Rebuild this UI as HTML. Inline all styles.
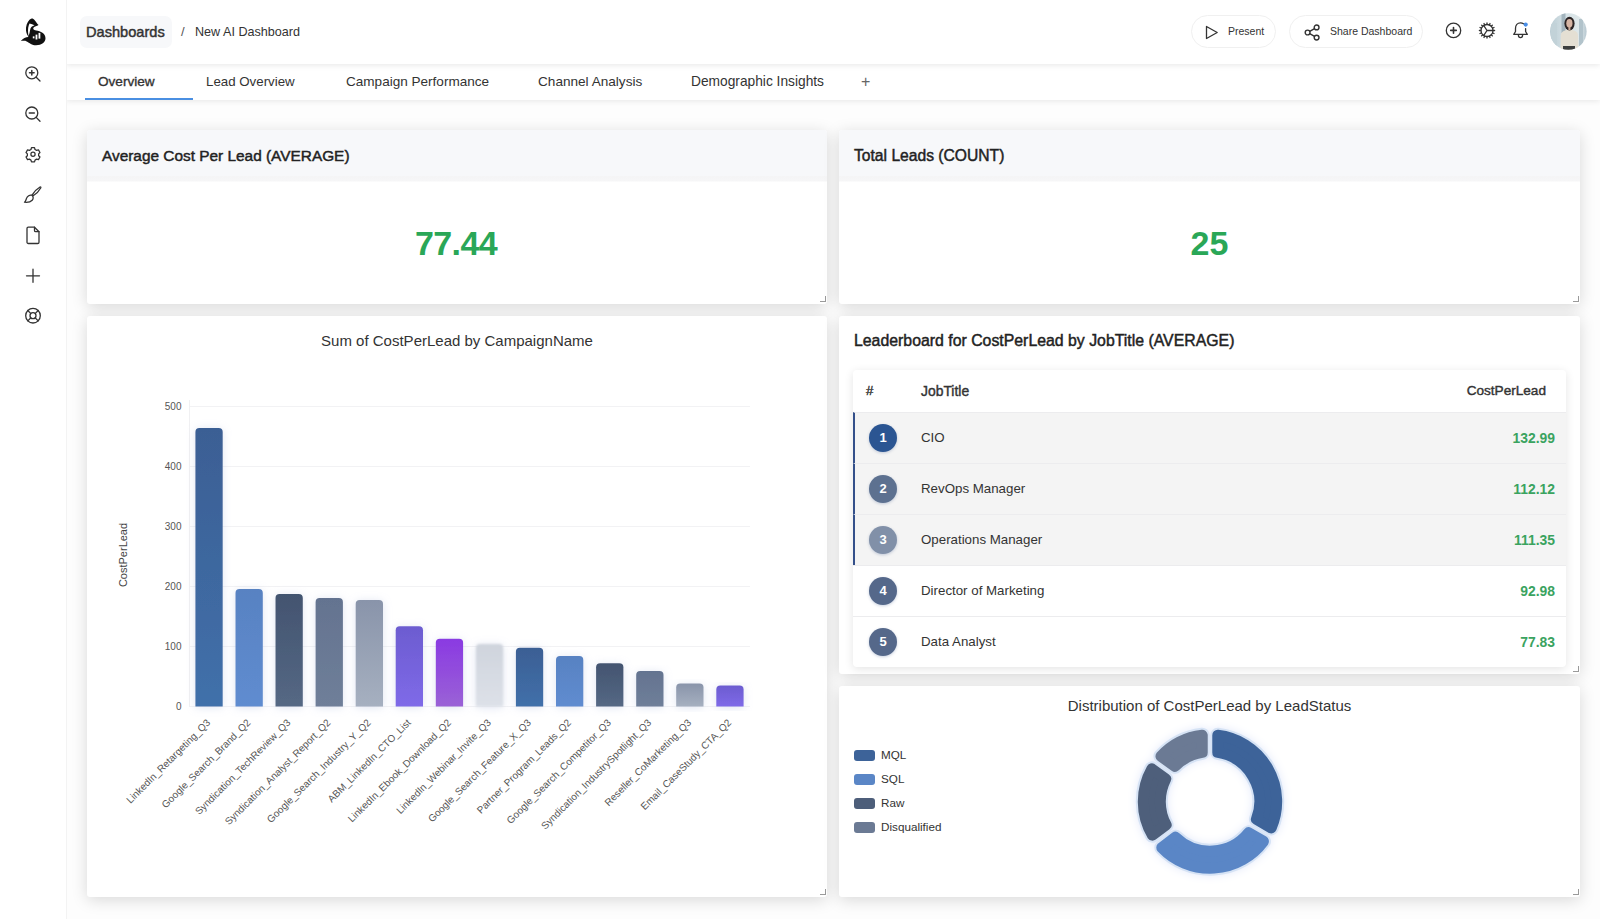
<!DOCTYPE html>
<html><head><meta charset="utf-8">
<style>
*{box-sizing:border-box;margin:0;padding:0}
html,body{width:1600px;height:919px;overflow:hidden;background:#fdfdfd;font-family:"Liberation Sans",sans-serif;color:#222}
.abs{position:absolute}
svg text{font-family:"Liberation Sans",sans-serif}
#side{position:absolute;left:0;top:0;width:67px;height:919px;background:#fff;border-right:1.5px solid #f3f3f3;z-index:4}
#hdr{position:absolute;left:66px;top:0;width:1534px;height:64px;background:#fff;box-shadow:0 1px 6px rgba(0,0,0,0.10);z-index:3}
#tabs{position:absolute;left:66px;top:64px;width:1534px;height:36px;background:#fff;box-shadow:0 1px 6px rgba(0,0,0,0.09);z-index:2}
.tab{position:absolute;top:1px;height:36px;line-height:34px;font-size:13px;color:#333;white-space:nowrap}
.card{position:absolute;background:#fff;border-radius:3px;box-shadow:0 3px 16px rgba(0,0,0,0.15)}
.chead{position:absolute;left:0;top:0;right:0;height:52px;background:linear-gradient(#f7f8fa 0,#f7f8fa 46px,#f5f5f6 46px,#f6f6f7 51px,#fff 52px);border-radius:3px 3px 0 0}
.ctitle{position:absolute;font-size:15.4px;font-weight:normal;color:#222;white-space:nowrap;line-height:18px;-webkit-text-stroke:0.45px #222}
.big{position:absolute;font-size:34px;font-weight:bold;color:#2aa757;white-space:nowrap;line-height:36px}
.rz{position:absolute;right:1px;bottom:2px;width:6px;height:6px;border-right:1.5px solid #9a9a9a;border-bottom:1.5px solid #9a9a9a}
.pill{position:absolute;top:15px;height:33px;border:1px solid #f0f0f0;border-radius:17px;background:#fff}
.pill span{position:absolute;top:0;line-height:31px;font-size:10.5px;color:#333;white-space:nowrap}
.tbl{position:absolute;left:14px;top:54px;width:713px;height:297px;background:#fff;border-radius:4px;box-shadow:0 2px 10px rgba(0,0,0,0.11);overflow:hidden}
.row{position:absolute;left:0;width:713px;height:51px;border-top:1px solid #ececee}
.row.hl{background:#f4f4f4;border-left:2px solid #34508a}
.badge{position:absolute;left:16px;top:11px;width:28px;height:28px;border-radius:14px;color:#fff;font-weight:bold;font-size:13px;text-align:center;line-height:28px;box-shadow:0 1px 3px rgba(40,70,130,0.25)}
.row.hl .badge{left:14px}
.jt{position:absolute;left:68px;top:0;line-height:50px;font-size:13.3px;color:#333;white-space:nowrap}
.row.hl .jt{left:66px}
.val{position:absolute;right:11px;top:0;line-height:51px;font-size:13.9px;font-weight:bold;color:#3aa35f;white-space:nowrap}
.leg{position:absolute;left:15px;width:21px;height:11px;border-radius:3px}
.legt{position:absolute;left:42px;font-size:11.7px;color:#333;line-height:14px;white-space:nowrap}
</style></head>
<body>
<div id="side">
<svg class="abs" style="left:0;top:0" width="66" height="340" viewBox="0 0 66 340" fill="none" stroke="#333" stroke-width="1.3" stroke-linecap="round" stroke-linejoin="round">
  <!-- logo -->
  <g transform="translate(18,16) scale(0.0348)" stroke="none">
    <path fill="#111" d="M420 70 C480 90,520 180,560 230 L590 262 C540 290,480 300,450 330 C420 360,440 400,520 420 C650 440,790 500,790 640 C790 760,680 840,520 840 C400 840,330 770,250 730 C190 700,120 720,80 720 C150 640,220 600,300 600 C270 560,240 500,230 420 C220 300,260 180,330 110 C360 80,390 70,420 70 Z"/>
    <path fill="#fff" d="M330 215 C380 225,430 245,475 268 C410 288,362 322,348 400 C338 460,328 520,306 572 C286 500,284 400,294 330 C304 280,316 240,330 215 Z"/>
    <rect fill="#fff" x="425" y="585" width="48" height="58"/>
    <rect fill="#fff" x="505" y="535" width="52" height="140"/>
    <rect fill="#fff" x="590" y="485" width="52" height="165"/>
  </g>
  <!-- zoom in -->
  <circle cx="31.8" cy="72.8" r="6"/><path d="M36.2,77.2 L40,81"/><path d="M31.8,70.5 V75.1 M29.5,72.8 H34.1" stroke-width="1.5"/>
  <!-- zoom out -->
  <circle cx="31.8" cy="113" r="6"/><path d="M36.2,117.4 L40,121.2"/><path d="M29.3,113 H34.3" stroke-width="1.5"/>
  <!-- gear -->
  <g transform="translate(33,154.2) scale(0.84) translate(-33,-154.5)" stroke-width="1.5">
  <path d="M31.2,147.2 h3.6 l0.6,2.2 l1.9,1.1 l2.2,-0.6 l1.8,3.1 l-1.6,1.6 v2.2 l1.6,1.6 l-1.8,3.1 l-2.2,-0.6 l-1.9,1.1 l-0.6,2.2 h-3.6 l-0.6,-2.2 l-1.9,-1.1 l-2.2,0.6 l-1.8,-3.1 l1.6,-1.6 v-2.2 l-1.6,-1.6 l1.8,-3.1 l2.2,0.6 l1.9,-1.1 z" transform="translate(0,-0.5)"/>
  <circle cx="33" cy="154.5" r="2.5"/>
  </g>
  <!-- brush -->
  <path d="M32.2,194.8 C34,192 37.5,188.5 40,187 C40.8,186.6 41.1,187.2 40.7,188 C39.3,190.5 35.8,194.3 33.2,195.8 Z"/>
  <path d="M31.8,195.2 C33.5,196.3 33.6,198.7 32.2,200.2 C30.5,202 27.5,202.5 24.5,202.2 C25.8,201.3 26,199.8 26.5,198.4 C27.3,196.2 29.8,194.5 31.8,195.2 Z"/>
  <!-- file -->
  <path d="M27,228.5 A1.3,1.3 0 0 1 28.3,227.2 H34.5 L39,231.7 V242.2 A1.3,1.3 0 0 1 37.7,243.5 H28.3 A1.3,1.3 0 0 1 27,242.2 Z"/><path d="M34.5,227.2 V230.5 A1.2,1.2 0 0 0 35.7,231.7 H39"/>
  <!-- plus -->
  <path d="M33,269.2 V282.3 M26.5,275.8 H39.5"/>
  <!-- lifebuoy -->
  <circle cx="33" cy="315.7" r="7.3"/><circle cx="33" cy="315.7" r="3"/>
  <path d="M27.8,310.5 L30.9,313.6 M38.2,310.5 L35.1,313.6 M27.8,320.9 L30.9,317.8 M38.2,320.9 L35.1,317.8"/>
</svg>
</div>

<div id="hdr">
  <div class="abs" style="left:14px;top:16px;width:92px;height:32px;background:#f7f8fa;border-radius:7px"></div>
  <div class="abs" style="left:20px;top:16px;line-height:32px;font-size:14.6px;color:#333;-webkit-text-stroke:0.45px #333">Dashboards</div>
  <div class="abs" style="left:115px;top:16px;line-height:32px;font-size:13px;color:#555">/</div>
  <div class="abs" style="left:129px;top:16px;line-height:32px;font-size:12.6px;color:#333">New AI Dashboard</div>

  <div class="pill" style="left:1125px;width:85px">
    <svg class="abs" style="left:13px;top:9px" width="14" height="15" viewBox="0 0 14 15" fill="none" stroke="#333" stroke-width="1.3" stroke-linejoin="round"><path d="M1.5,1.5 L12.2,7.5 L1.5,13.5 Z"/></svg>
    <span style="left:36px">Present</span>
  </div>
  <div class="pill" style="left:1223px;width:134px">
    <svg class="abs" style="left:14px;top:8px" width="17" height="17" viewBox="0 0 17 17" fill="none" stroke="#333" stroke-width="1.4"><circle cx="3.6" cy="8.5" r="2.4"/><circle cx="12.6" cy="3.4" r="2.4"/><circle cx="12.6" cy="13.6" r="2.4"/><path d="M5.7,7.3 L10.5,4.6 M5.7,9.7 L10.5,12.4"/></svg>
    <span style="left:40px">Share Dashboard</span>
  </div>
  <svg class="abs" style="left:1370px;top:12px" width="165" height="40" viewBox="1436 12 165 40" fill="none" stroke="#333" stroke-width="1.3" stroke-linecap="round" stroke-linejoin="round">
    <circle cx="1453.5" cy="30.4" r="7.2"/><path d="M1453.5,27.6 V33.2 M1450.7,30.4 H1456.3" stroke-width="1.6"/>
    <circle cx="1487" cy="30.5" r="6"/>
    <path d="M1487,30.5 L1492.8,30.5 M1487,30.5 L1483.8,25.6 M1487,30.5 L1483.8,35.4"/>
    <path d="M1487,22.9 V24.2 M1487,36.8 V38.1 M1479.4,30.5 H1480.7 M1493.3,30.5 H1494.6 M1481.6,25.1 L1482.5,26 M1491.5,35 L1492.4,35.9 M1481.6,35.9 L1482.5,35 M1491.5,26 L1492.4,25.1 M1484,23.5 L1484.5,24.7 M1490,23.5 L1489.5,24.7 M1484,37.5 L1484.5,36.3 M1490,37.5 L1489.5,36.3 M1480,27.5 L1481.2,28 M1480,33.5 L1481.2,33 M1494,27.5 L1492.8,28 M1494,33.5 L1492.8,33"/>
    <path d="M1523.5,23.8 C1522.6,23.2 1521.6,22.9 1520.5,22.9 C1517.4,22.9 1515.5,25.3 1515.5,28.3 V31.5 L1513.8,34.4 H1527.3 L1525.6,31.5 V28.6"/>
    <path d="M1518.4,35 C1518.4,36.5 1519.3,37.6 1520.5,37.6 C1521.7,37.6 1522.6,36.5 1522.6,35"/>
    <circle cx="1525.7" cy="24.6" r="2.1" fill="#4a8ee6" stroke="none"/>
  </svg>
  <svg class="abs" style="left:1483px;top:13px" width="38" height="38" viewBox="0 0 38 38">
    <defs><clipPath id="av"><circle cx="19.3" cy="18.5" r="18.3"/></clipPath>
    <linearGradient id="avbg" x1="0" y1="0" x2="1" y2="0"><stop offset="0" stop-color="#b9cbd3"/><stop offset="0.45" stop-color="#d6e2e6"/><stop offset="0.8" stop-color="#dfe8ea"/><stop offset="1" stop-color="#b5c6cf"/></linearGradient></defs>
    <g clip-path="url(#av)">
      <rect width="38" height="38" fill="url(#avbg)"/>
      <rect x="12.5" y="0" width="4" height="20" fill="#a3b4bd"/>
      <rect x="30" y="6" width="4" height="30" fill="#b2c3cb"/>
      <rect x="2" y="10" width="6" height="26" fill="#c2d2d8"/>
      <path d="M11.5,38 L11.8,22 C12.3,18.5 15,17 20.5,17 C26,17 28.5,18.5 29,22 L29.5,38 Z" fill="#e4dfd3"/>
      <path d="M14,33 H26 V38 H14 Z" fill="#3c3e3e"/>
      <ellipse cx="20.5" cy="10.6" rx="5.1" ry="6.8" fill="#2b2323"/>
      <ellipse cx="20.4" cy="10.2" rx="3.1" ry="4.3" fill="#d6b4a3"/>
      <rect x="19.4" y="14" width="2" height="3.2" fill="#cfab98"/>
    </g>
  </svg>
</div>

<div id="tabs">
  <div class="tab" style="left:32px;font-size:13.6px;color:#333;-webkit-text-stroke:0.35px #333">Overview</div>
  <div class="abs" style="left:19px;top:34px;width:108px;height:2px;background:#4a8fe2"></div>
  <div class="tab" style="left:140px;font-size:13.3px">Lead Overview</div>
  <div class="tab" style="left:280px;font-size:13.55px">Campaign Performance</div>
  <div class="tab" style="left:472px;font-size:13.6px">Channel Analysis</div>
  <div class="tab" style="left:625px;font-size:13.75px">Demographic Insights</div>
  <div class="tab" style="left:795px;font-size:16px;color:#666">+</div>
</div>

<div class="card" style="left:87px;top:130px;width:740px;height:174px">
  <div class="chead"></div>
  <div class="ctitle" style="left:15px;top:17px">Average Cost Per Lead (AVERAGE)</div>
  <div class="big" style="left:328px;top:95px;letter-spacing:-0.6px">77.44</div>
  <div class="rz"></div>
</div>
<div class="card" style="left:839px;top:130px;width:741px;height:174px">
  <div class="chead"></div>
  <div class="ctitle" style="left:15px;top:17px;font-size:15.65px">Total Leads (COUNT)</div>
  <div class="big" style="left:351.5px;top:95px">25</div>
  <div class="rz"></div>
</div>
<div class="card" style="left:87px;top:316px;width:740px;height:581px">
  <div class="abs" style="left:0;top:16px;width:740px;text-align:center;font-size:15px;color:#333;line-height:18px">Sum of CostPerLead by CampaignName</div>
  <div class="rz"></div>
</div>
<div class="card" style="left:839px;top:316px;width:741px;height:358px">
  <div class="ctitle" style="left:15px;top:16px;font-size:15.85px">Leaderboard for CostPerLead by JobTitle (AVERAGE)</div>
  <div class="tbl">
    <div class="abs" style="left:13px;top:0;line-height:42px;font-size:13.2px;color:#333;-webkit-text-stroke:0.4px #333">#</div>
    <div class="abs" style="left:68px;top:0;line-height:42px;font-size:13.9px;color:#333;-webkit-text-stroke:0.4px #333">JobTitle</div>
    <div class="abs" style="right:20px;top:0;line-height:42px;font-size:13.6px;color:#333;-webkit-text-stroke:0.4px #333">CostPerLead</div>
    <div class="row hl" style="top:42px"><div class="badge" style="background:#2b5592">1</div><div class="jt">CIO</div><div class="val">132.99</div></div>
    <div class="row hl" style="top:93px"><div class="badge" style="background:#5d7190">2</div><div class="jt">RevOps Manager</div><div class="val">112.12</div></div>
    <div class="row hl" style="top:144px"><div class="badge" style="background:#8190a8">3</div><div class="jt">Operations Manager</div><div class="val">111.35</div></div>
    <div class="row" style="top:195px"><div class="badge" style="background:#55688a">4</div><div class="jt">Director of Marketing</div><div class="val">92.98</div></div>
    <div class="row" style="top:246px"><div class="badge" style="background:#55688a">5</div><div class="jt">Data Analyst</div><div class="val">77.83</div></div>
  </div>
  <div class="rz"></div>
</div>
<div class="card" style="left:839px;top:686px;width:741px;height:211px">
  <div class="abs" style="left:0;top:11px;width:741px;text-align:center;font-size:15px;color:#333;line-height:18px">Distribution of CostPerLead by LeadStatus</div>
  <div class="leg" style="top:64px;background:#3d6399"></div><div class="legt" style="top:62px">MQL</div>
  <div class="leg" style="top:88px;background:#5a86c6"></div><div class="legt" style="top:86px">SQL</div>
  <div class="leg" style="top:112px;background:#4d5e7a"></div><div class="legt" style="top:110px">Raw</div>
  <div class="leg" style="top:136px;background:#6b7a94"></div><div class="legt" style="top:134px">Disqualified</div>
  <div class="rz"></div>
</div>
<svg class="abs" style="left:0;top:0" width="1600" height="919" viewBox="0 0 1600 919">
<defs>
<linearGradient id="g0" x1="0" y1="0" x2="0" y2="1"><stop offset="0" stop-color="#3b5f94"/><stop offset="1" stop-color="#4170aa"/></linearGradient>
<linearGradient id="g1" x1="0" y1="0" x2="0" y2="1"><stop offset="0" stop-color="#5882c2"/><stop offset="1" stop-color="#5f8cd0"/></linearGradient>
<linearGradient id="g2" x1="0" y1="0" x2="0" y2="1"><stop offset="0" stop-color="#435470"/><stop offset="1" stop-color="#556884"/></linearGradient>
<linearGradient id="g3" x1="0" y1="0" x2="0" y2="1"><stop offset="0" stop-color="#647390"/><stop offset="1" stop-color="#6f7f99"/></linearGradient>
<linearGradient id="g4" x1="0" y1="0" x2="0" y2="1"><stop offset="0" stop-color="#8994aa"/><stop offset="1" stop-color="#a6b0c0"/></linearGradient>
<linearGradient id="g5" x1="0" y1="0" x2="0" y2="1"><stop offset="0" stop-color="#6c5cd0"/><stop offset="1" stop-color="#7f6ae8"/></linearGradient>
<linearGradient id="g6" x1="0" y1="0" x2="0" y2="1"><stop offset="0" stop-color="#8a3ae2"/><stop offset="1" stop-color="#9a62d6"/></linearGradient>
<linearGradient id="g7" x1="0" y1="0" x2="0" y2="1"><stop offset="0" stop-color="#cfd4dd"/><stop offset="1" stop-color="#dde1e8"/></linearGradient>
<filter id="bsh" x="-60%" y="-20%" width="220%" height="140%"><feGaussianBlur in="SourceAlpha" stdDeviation="4"/><feOffset dy="1"/><feColorMatrix values="0 0 0 0 0.38  0 0 0 0 0.45  0 0 0 0 0.7  0 0 0 0.36 0"/><feMerge><feMergeNode/><feMergeNode in="SourceGraphic"/></feMerge></filter>
<filter id="bsh8" x="-60%" y="-20%" width="220%" height="140%"><feGaussianBlur in="SourceAlpha" stdDeviation="4"/><feOffset dy="1"/><feColorMatrix values="0 0 0 0 0.38  0 0 0 0 0.45  0 0 0 0 0.7  0 0 0 0.36 0"/><feMerge><feMergeNode/><feMergeNode in="SourceGraphic"/></feMerge><feGaussianBlur stdDeviation="1.3"/></filter>
</defs>
<line x1="189" y1="706.5" x2="750" y2="706.5" stroke="#f2f2f4" stroke-width="1"/>
<text x="181.5" y="710.0" text-anchor="end" font-size="10" fill="#555">0</text>
<line x1="189" y1="646.5" x2="750" y2="646.5" stroke="#f2f2f4" stroke-width="1"/>
<text x="181.5" y="650.0" text-anchor="end" font-size="10" fill="#555">100</text>
<line x1="189" y1="586.5" x2="750" y2="586.5" stroke="#f2f2f4" stroke-width="1"/>
<text x="181.5" y="590.0" text-anchor="end" font-size="10" fill="#555">200</text>
<line x1="189" y1="526.5" x2="750" y2="526.5" stroke="#f2f2f4" stroke-width="1"/>
<text x="181.5" y="530.0" text-anchor="end" font-size="10" fill="#555">300</text>
<line x1="189" y1="466.5" x2="750" y2="466.5" stroke="#f2f2f4" stroke-width="1"/>
<text x="181.5" y="470.0" text-anchor="end" font-size="10" fill="#555">400</text>
<line x1="189" y1="406.5" x2="750" y2="406.5" stroke="#f2f2f4" stroke-width="1"/>
<text x="181.5" y="410.0" text-anchor="end" font-size="10" fill="#555">500</text>
<line x1="189.5" y1="400" x2="189.5" y2="707" stroke="#f0f0f2" stroke-width="1"/>
<path filter="url(#bsh)" fill="url(#g0)" d="M195.4,706.5 V432.1 Q195.4,428.1 199.4,428.1 H218.7 Q222.7,428.1 222.7,432.1 V706.5 Z"/>
<text transform="translate(209.2,721.5) rotate(-45)" text-anchor="end" dominant-baseline="middle" font-size="10" fill="#555">LinkedIn_Retargeting_Q3</text>
<path filter="url(#bsh)" fill="url(#g1)" d="M235.5,706.5 V592.9 Q235.5,588.9 239.5,588.9 H258.8 Q262.8,588.9 262.8,592.9 V706.5 Z"/>
<text transform="translate(249.3,721.5) rotate(-45)" text-anchor="end" dominant-baseline="middle" font-size="10" fill="#555">Google_Search_Brand_Q2</text>
<path filter="url(#bsh)" fill="url(#g2)" d="M275.5,706.5 V598.0 Q275.5,594.0 279.5,594.0 H298.8 Q302.8,594.0 302.8,598.0 V706.5 Z"/>
<text transform="translate(289.4,721.5) rotate(-45)" text-anchor="end" dominant-baseline="middle" font-size="10" fill="#555">Syndication_TechReview_Q3</text>
<path filter="url(#bsh)" fill="url(#g3)" d="M315.6,706.5 V602.1 Q315.6,598.1 319.6,598.1 H338.9 Q342.9,598.1 342.9,602.1 V706.5 Z"/>
<text transform="translate(329.4,721.5) rotate(-45)" text-anchor="end" dominant-baseline="middle" font-size="10" fill="#555">Syndication_Analyst_Report_Q2</text>
<path filter="url(#bsh)" fill="url(#g4)" d="M355.7,706.5 V604.0 Q355.7,600.0 359.7,600.0 H379.0 Q383.0,600.0 383.0,604.0 V706.5 Z"/>
<text transform="translate(369.5,721.5) rotate(-45)" text-anchor="end" dominant-baseline="middle" font-size="10" fill="#555">Google_Search_Industry_Y_Q2</text>
<path filter="url(#bsh)" fill="url(#g5)" d="M395.7,706.5 V630.2 Q395.7,626.2 399.7,626.2 H419.0 Q423.0,626.2 423.0,630.2 V706.5 Z"/>
<text transform="translate(409.6,721.5) rotate(-45)" text-anchor="end" dominant-baseline="middle" font-size="10" fill="#555">ABM_LinkedIn_CTO_List</text>
<path filter="url(#bsh)" fill="url(#g6)" d="M435.8,706.5 V642.8 Q435.8,638.8 439.8,638.8 H459.1 Q463.1,638.8 463.1,642.8 V706.5 Z"/>
<text transform="translate(449.7,721.5) rotate(-45)" text-anchor="end" dominant-baseline="middle" font-size="10" fill="#555">LinkedIn_Ebook_Download_Q2</text>
<path filter="url(#bsh8)" fill="url(#g7)" d="M475.9,706.5 V648.1 Q475.9,644.1 479.9,644.1 H499.2 Q503.2,644.1 503.2,648.1 V706.5 Z"/>
<text transform="translate(489.7,721.5) rotate(-45)" text-anchor="end" dominant-baseline="middle" font-size="10" fill="#555">LinkedIn_Webinar_Invite_Q3</text>
<path filter="url(#bsh)" fill="url(#g0)" d="M515.9,706.5 V651.7 Q515.9,647.7 519.9,647.7 H539.2 Q543.2,647.7 543.2,651.7 V706.5 Z"/>
<text transform="translate(529.8,721.5) rotate(-45)" text-anchor="end" dominant-baseline="middle" font-size="10" fill="#555">Google_Search_Feature_X_Q3</text>
<path filter="url(#bsh)" fill="url(#g1)" d="M556.0,706.5 V660.1 Q556.0,656.1 560.0,656.1 H579.3 Q583.3,656.1 583.3,660.1 V706.5 Z"/>
<text transform="translate(569.9,721.5) rotate(-45)" text-anchor="end" dominant-baseline="middle" font-size="10" fill="#555">Partner_Program_Leads_Q2</text>
<path filter="url(#bsh)" fill="url(#g2)" d="M596.1,706.5 V667.3 Q596.1,663.3 600.1,663.3 H619.4 Q623.4,663.3 623.4,667.3 V706.5 Z"/>
<text transform="translate(609.9,721.5) rotate(-45)" text-anchor="end" dominant-baseline="middle" font-size="10" fill="#555">Google_Search_Competitor_Q3</text>
<path filter="url(#bsh)" fill="url(#g3)" d="M636.2,706.5 V675.1 Q636.2,671.1 640.2,671.1 H659.5 Q663.5,671.1 663.5,675.1 V706.5 Z"/>
<text transform="translate(650.0,721.5) rotate(-45)" text-anchor="end" dominant-baseline="middle" font-size="10" fill="#555">Syndication_IndustrySpotlight_Q3</text>
<path filter="url(#bsh)" fill="url(#g4)" d="M676.2,706.5 V687.4 Q676.2,683.4 680.2,683.4 H699.5 Q703.5,683.4 703.5,687.4 V706.5 Z"/>
<text transform="translate(690.1,721.5) rotate(-45)" text-anchor="end" dominant-baseline="middle" font-size="10" fill="#555">Reseller_CoMarketing_Q3</text>
<path filter="url(#bsh)" fill="url(#g5)" d="M716.3,706.5 V689.5 Q716.3,685.5 720.3,685.5 H739.6 Q743.6,685.5 743.6,689.5 V706.5 Z"/>
<text transform="translate(730.1,721.5) rotate(-45)" text-anchor="end" dominant-baseline="middle" font-size="10" fill="#555">Email_CaseStudy_CTA_Q2</text>
<text transform="translate(127,555) rotate(-90)" text-anchor="middle" font-size="11" fill="#444">CostPerLead</text>
</svg>
<svg class="abs" style="left:0;top:0" width="1600" height="919" viewBox="0 0 1600 919">
<filter id="dsh" x="-30%" y="-30%" width="160%" height="160%"><feGaussianBlur in="SourceAlpha" stdDeviation="4"/><feColorMatrix values="0 0 0 0 0.45  0 0 0 0 0.55  0 0 0 0 0.9  0 0 0 0.35 0"/></filter>
<g filter="url(#dsh)">
<path d="M1217.78,735.26 A66.7,66.7 0 0 1 1271.26,827.88 L1256.40,819.32 A49.7,49.7 0 0 0 1217.77,752.41 Z" fill="#000" stroke="#000" stroke-width="15" stroke-linejoin="round"/>
<path d="M1263.48,841.36 A66.7,66.7 0 0 1 1161.78,847.58 L1175.47,837.25 A49.7,49.7 0 0 0 1248.63,832.77 Z" fill="#000" stroke="#000" stroke-width="15" stroke-linejoin="round"/>
<path d="M1152.41,835.15 A66.7,66.7 0 0 1 1151.83,768.86 L1165.72,778.93 A49.7,49.7 0 0 0 1166.12,824.84 Z" fill="#000" stroke="#000" stroke-width="15" stroke-linejoin="round"/>
<path d="M1160.98,756.27 A66.7,66.7 0 0 1 1202.22,735.26 L1202.23,752.41 A49.7,49.7 0 0 0 1174.85,766.36 Z" fill="#000" stroke="#000" stroke-width="15" stroke-linejoin="round"/>
</g>
<path d="M1217.78,735.26 A66.7,66.7 0 0 1 1271.26,827.88 L1256.40,819.32 A49.7,49.7 0 0 0 1217.77,752.41 Z" fill="#d6e3f5" stroke="#d6e3f5" stroke-width="15" stroke-linejoin="round"/>
<path d="M1217.78,735.26 A66.7,66.7 0 0 1 1271.26,827.88 L1256.40,819.32 A49.7,49.7 0 0 0 1217.77,752.41 Z" fill="#3d6399" stroke="#3d6399" stroke-width="11" stroke-linejoin="round"/>
<path d="M1263.48,841.36 A66.7,66.7 0 0 1 1161.78,847.58 L1175.47,837.25 A49.7,49.7 0 0 0 1248.63,832.77 Z" fill="#d6e3f5" stroke="#d6e3f5" stroke-width="15" stroke-linejoin="round"/>
<path d="M1263.48,841.36 A66.7,66.7 0 0 1 1161.78,847.58 L1175.47,837.25 A49.7,49.7 0 0 0 1248.63,832.77 Z" fill="#5a86c6" stroke="#5a86c6" stroke-width="11" stroke-linejoin="round"/>
<path d="M1152.41,835.15 A66.7,66.7 0 0 1 1151.83,768.86 L1165.72,778.93 A49.7,49.7 0 0 0 1166.12,824.84 Z" fill="#d6e3f5" stroke="#d6e3f5" stroke-width="15" stroke-linejoin="round"/>
<path d="M1152.41,835.15 A66.7,66.7 0 0 1 1151.83,768.86 L1165.72,778.93 A49.7,49.7 0 0 0 1166.12,824.84 Z" fill="#4e5f7b" stroke="#4e5f7b" stroke-width="11" stroke-linejoin="round"/>
<path d="M1160.98,756.27 A66.7,66.7 0 0 1 1202.22,735.26 L1202.23,752.41 A49.7,49.7 0 0 0 1174.85,766.36 Z" fill="#d6e3f5" stroke="#d6e3f5" stroke-width="15" stroke-linejoin="round"/>
<path d="M1160.98,756.27 A66.7,66.7 0 0 1 1202.22,735.26 L1202.23,752.41 A49.7,49.7 0 0 0 1174.85,766.36 Z" fill="#6b7a94" stroke="#6b7a94" stroke-width="11" stroke-linejoin="round"/>
</svg>
</body></html>
